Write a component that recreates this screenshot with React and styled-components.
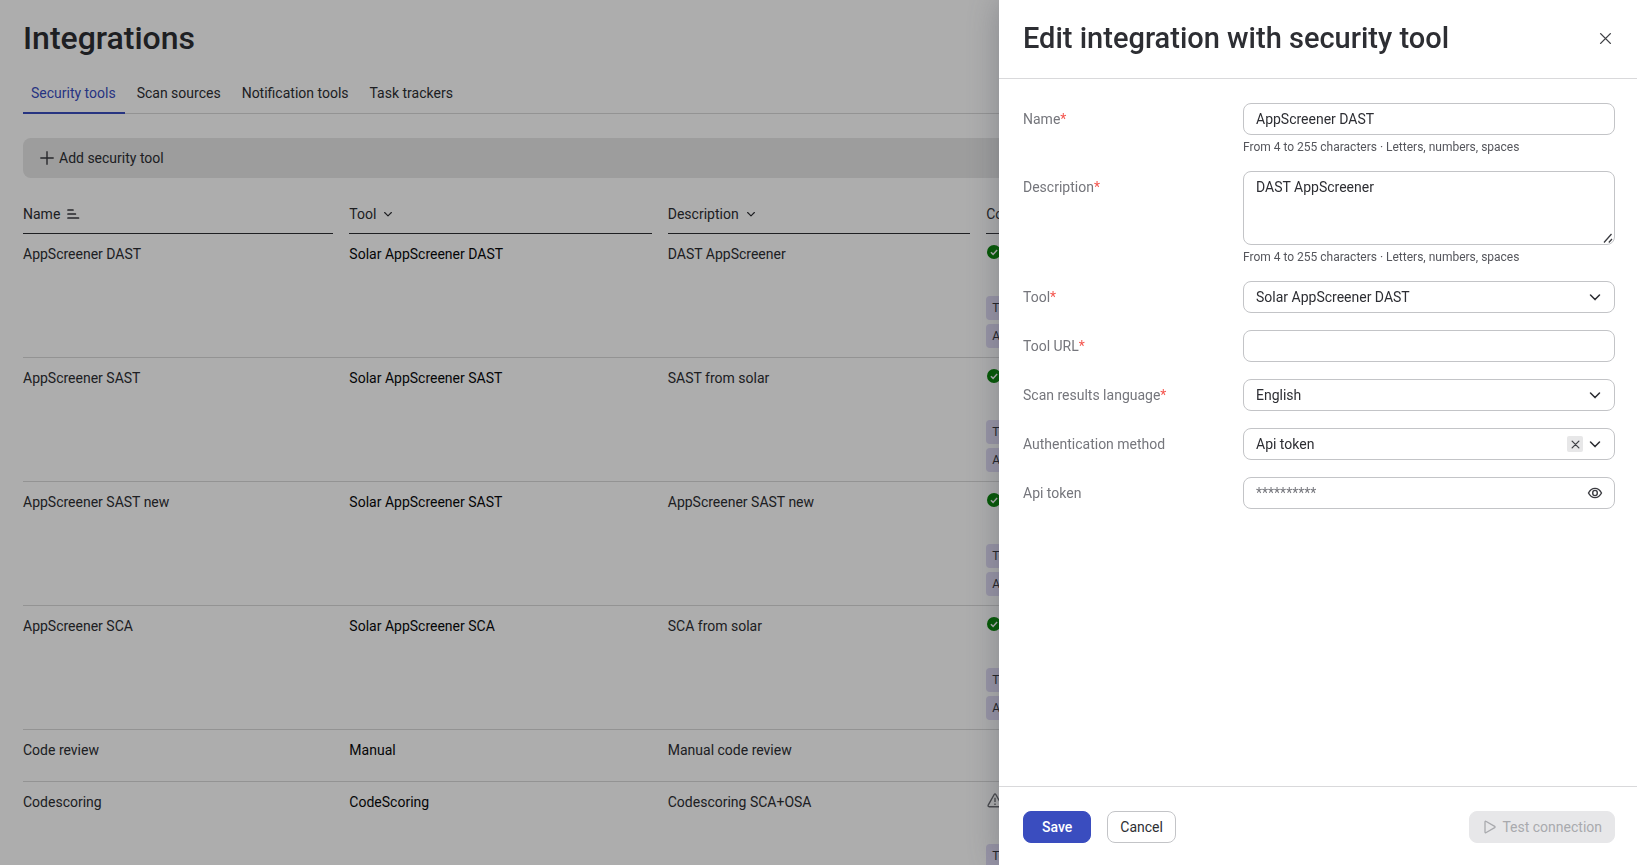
import React from "react";
import styled, { createGlobalStyle } from "styled-components";

const GlobalStyle = createGlobalStyle`
  *, *::before, *::after { box-sizing: border-box; }
  body {
    margin: 0;
    overflow: hidden;
    background: #fff;
    color: #2d2e33;
    font-family: Roboto, "Liberation Sans", sans-serif;
    font-size: 14px;
    line-height: 20px;
  }
  button, input, select, textarea { font: inherit; color: inherit; }
`;

const Page = styled.main`
  height: 100vh;
  overflow: hidden;
  padding: 18px 22px 0 23px;
`;

const PageTitle = styled.h1`
  margin: 0 0 15px;
  font-size: 32px;
  line-height: 40px;
  font-weight: 500;
`;

const Tabs = styled.nav`
  display: flex;
  gap: 4px;
  height: 41px;
  border-bottom: 1px solid #d9d9d9;
`;

const Tab = styled.a`
  height: 41px;
  padding: 10px 9px 0 8px;
  text-decoration: none;
  color: ${(p) => (p.$active ? "#3a4dbf" : "inherit")};
  border-bottom: ${(p) => (p.$active ? "2px solid #3a4dbf" : "0")};
`;

const AddBar = styled.div`
  margin: 24px 0 16px;
  padding: 4px 8px;
  height: 40px;
  border-radius: 8px;
  background: #e7e7e7;
`;

const AddButton = styled.button`
  display: flex;
  align-items: center;
  gap: 4px;
  height: 32px;
  padding: 0 8px;
  border: 0;
  background: none;
`;

const Table = styled.table`
  width: 100%;
  table-layout: fixed;
  border-collapse: separate;
  border-spacing: 0;
`;

const Col = styled.col`
  width: ${(p) => p.$width};
`;

const HeadCell = styled.th`
  padding: 0 16px 0 0;
  font-weight: 400;
  text-align: left;
`;

const HeadLabel = styled.div`
  display: flex;
  align-items: center;
  gap: 6px;
  height: 40px;
  border-bottom: 1px solid #2d2e33;
`;

const Cell = styled.td`
  height: ${(p) => (p.$tall ? "124px" : "52px")};
  padding: 10px 16px 0 0;
  vertical-align: top;
  border-bottom: 1px solid #d9d9d9;
`;

const Status = styled.div`
  display: flex;
  align-items: center;
  height: 16px;
  padding-left: 1px;
  margin-bottom: 36px;
`;

const Tags = styled.div`
  display: flex;
  flex-direction: column;
  align-items: flex-start;
  gap: 4px;
`;

const Tag = styled.span`
  height: 24px;
  padding: 0 6px;
  border-radius: 4px;
  background: #dfdaf4;
  font-size: 12px;
  line-height: 24px;
`;

const Overlay = styled.div`
  position: fixed;
  inset: 0;
  display: flex;
  justify-content: flex-end;
  background: rgba(0, 0, 0, 0.32);
`;

const Drawer = styled.section`
  display: flex;
  flex-direction: column;
  width: 638px;
  max-width: 100vw;
  background: #fff;
  box-shadow: 0 0 32px rgba(60, 66, 80, 0.36);
`;

const DrawerHeader = styled.header`
  display: flex;
  align-items: center;
  justify-content: space-between;
  height: 79px;
  padding: 0 22px 2px 24px;
  border-bottom: 1px solid #d9d9db;
`;

const DrawerTitle = styled.h2`
  margin: 0;
  font-size: 29px;
  line-height: 36px;
  font-weight: 500;
`;

const IconButton = styled.button`
  display: flex;
  align-items: center;
  justify-content: center;
  width: 20px;
  height: 20px;
  padding: 0;
  border: 0;
  background: none;
`;

const Form = styled.form`
  flex: 1;
  display: flex;
  flex-direction: column;
  gap: 16px;
  padding: 24px 22px 24px 24px;
  overflow: auto;
`;

const Row = styled.div`
  display: grid;
  grid-template-columns: 220px 1fr;
  min-height: 33px;
`;

const Label = styled.label`
  padding-top: 6px;
  color: #75767c;
`;

const Required = styled.span`
  color: #f4564f;
`;

const Control = styled.div`
  position: relative;
  display: flex;
`;

const Input = styled.input`
  width: 100%;
  height: 32px;
  padding: 0 12px;
  border: 1px solid #c3c4c7;
  border-radius: 8px;
  background: #fff;
  &::placeholder { color: #75767c; opacity: 1; }
`;

const Select = styled.select`
  width: 100%;
  height: 32px;
  padding: 0 60px 0 12px;
  border: 1px solid #c3c4c7;
  border-radius: 8px;
  background: #fff;
  appearance: none;
`;

const TextArea = styled.textarea`
  width: 100%;
  height: 74px;
  padding: 5px 12px;
  border: 1px solid #c3c4c7;
  border-radius: 8px;
  resize: vertical;
  &::-webkit-resizer { display: none; }
`;

const Adornments = styled.div`
  position: absolute;
  top: 0;
  right: 12px;
  display: flex;
  align-items: center;
  gap: 4px;
  height: 32px;
  pointer-events: none;
`;

const ResizeMark = styled.svg`
  position: absolute;
  right: 2px;
  bottom: 2px;
  pointer-events: none;
`;

const ClearButton = styled.button`
  display: flex;
  align-items: center;
  justify-content: center;
  width: 16px;
  height: 16px;
  padding: 0;
  border: 0;
  border-radius: 2px;
  background: #e7e7e8;
  pointer-events: auto;
`;

const Hint = styled.p`
  margin: 4px 0 0;
  font-size: 12px;
  line-height: 16px;
  color: #55565c;
`;

const DrawerFooter = styled.footer`
  display: flex;
  align-items: center;
  gap: 16px;
  padding: 24px 22px 22px 24px;
  border-top: 1px solid #d9d9db;
`;

const buttonColors = {
  primary: "background: #3a4dbf; border-color: #3a4dbf; color: #fff; padding: 0 18px;",
  outline: "background: #fff; border-color: #c3c4c7;",
  muted: "background: #e7e7e9; border-color: #e7e7e9; color: #a9aaae; margin-left: auto;",
};

const Button = styled.button`
  display: flex;
  align-items: center;
  gap: 4px;
  height: 32px;
  padding: 0 12px;
  border: 1px solid;
  border-radius: 8px;
  font-weight: ${(p) => (p.$kind === "primary" ? 500 : 400)};
  ${(p) => buttonColors[p.$kind]}
`;

const PlusIcon = () => (
  <svg width="16" height="16" viewBox="0 0 16 16" stroke="#3a3b40" strokeWidth="1.4" fill="none" aria-hidden="true">
    <path d="M8 1.3v13.4M1.3 8h13.4" />
  </svg>
);

const SortIcon = () => (
  <svg width="14" height="12" viewBox="0 0 14 12" stroke="#3a3b40" strokeWidth="1.7" strokeLinecap="round" aria-hidden="true">
    <path d="M2 2h5M2 6h7.4M2 10h10.5" />
  </svg>
);

const ChevronIcon = ({ size = 16 }) => (
  <svg width={size} height={size} viewBox="0 0 16 16" stroke="#2d2e33" strokeWidth="1.5" fill="none" strokeLinecap="round" strokeLinejoin="round" aria-hidden="true">
    <path d="M3.5 6l4.5 4.6L12.5 6" />
  </svg>
);

const CrossIcon = ({ size, width = 1.3 }) => (
  <svg width={size} height={size} viewBox="0 0 12 12" stroke="#3f4045" strokeWidth={width} fill="none" strokeLinecap="round" aria-hidden="true">
    <path d="M1.5 1.5l9 9M10.5 1.5l-9 9" />
  </svg>
);

const CheckIcon = () => (
  <svg width="14" height="14" viewBox="0 0 14 14" role="img" aria-label="Connected">
    <circle cx="7" cy="7" r="7" fill="#008000" />
    <path d="M3.9 7.2l2.2 2.2 4-4.3" stroke="#fff" strokeWidth="1.5" fill="none" />
  </svg>
);

const WarningIcon = () => (
  <svg width="16" height="15" viewBox="0 0 16 15" stroke="#66676c" strokeWidth="1.4" fill="none" strokeLinejoin="round" role="img" aria-label="Warning">
    <path d="M7.2 1.5L1.2 12.2c-.4.8 0 1.5.9 1.5h11.8c.9 0 1.300-.7.9-1.5L8.800 1.5c-.4-.7-1.200-.7-1.600 0z" />
    <path d="M8 4.800v4.200M8 10.500v1.400" />
  </svg>
);

const EyeIcon = () => (
  <svg width="16" height="16" viewBox="0 0 16 16" stroke="#3a3b40" strokeWidth="1.4" fill="none" aria-hidden="true">
    <path d="M1.5 8C3 5.100 5.300 3.400 8 3.400S13 5.100 14.500 8C13 10.900 10.700 12.600 8 12.600S3 10.900 1.500 8z" />
    <ellipse cx="8" cy="8" rx="2.300" ry="2.600" />
  </svg>
);

const PlayIcon = () => (
  <svg width="16" height="16" viewBox="0 0 16 16" stroke="#a9aaae" strokeWidth="1.3" fill="none" strokeLinejoin="round" aria-hidden="true">
    <path d="M3 2.700v10.600a.5.5 0 00.8.4l8.900-5.100a.7.7 0 000-1.200L3.800 2.300a.5.500 0 00-.8.4z" />
  </svg>
);

const tabs = ["Security tools", "Scan sources", "Notification tools", "Task trackers"];

const rows = [
  { name: "AppScreener DAST", tool: "Solar AppScreener DAST", text: "DAST AppScreener", status: "ok" },
  { name: "AppScreener SAST", tool: "Solar AppScreener SAST", text: "SAST from solar", status: "ok" },
  { name: "AppScreener SAST new", tool: "Solar AppScreener SAST", text: "AppScreener SAST new", status: "ok" },
  { name: "AppScreener SCA", tool: "Solar AppScreener SCA", text: "SCA from solar", status: "ok" },
  { name: "Code review", tool: "Manual", text: "Manual code review" },
  { name: "Codescoring", tool: "CodeScoring", text: "Codescoring SCA+OSA", status: "warning" },
];

const ToolName = styled.span`
  color: #08090b;
`;

function Field({ id, label, required, hint, children }) {
  return (
    <Row>
      <Label htmlFor={id}>
        {label}
        {required && <Required>*</Required>}
      </Label>
      <div>
        <Control>{children}</Control>
        {hint && <Hint>{hint}</Hint>}
      </div>
    </Row>
  );
}

const limits = "From 4 to 255 characters · Letters, numbers, spaces";

export default function App() {
  return (
    <>
      <GlobalStyle />
      <Page>
        <PageTitle>Integrations</PageTitle>
        <Tabs>
          {tabs.map((t, i) => (
            <Tab key={t} href="#" $active={i === 0}>{t}</Tab>
          ))}
        </Tabs>
        <AddBar>
          <AddButton type="button"><PlusIcon />Add security tool</AddButton>
        </AddBar>
        <Table>
          <colgroup>
            <Col $width="20.5%" />
            <Col $width="20%" />
            <Col $width="20%" />
            <Col />
          </colgroup>
          <thead>
            <tr>
              <HeadCell><HeadLabel>Name <SortIcon /></HeadLabel></HeadCell>
              <HeadCell><HeadLabel>Tool <ChevronIcon size={12} /></HeadLabel></HeadCell>
              <HeadCell><HeadLabel>Description <ChevronIcon size={12} /></HeadLabel></HeadCell>
              <HeadCell><HeadLabel>Connection</HeadLabel></HeadCell>
            </tr>
          </thead>
          <tbody>
            {rows.map((r) => (
              <tr key={r.name}>
                <Cell $tall={r.status}>{r.name}</Cell>
                <Cell $tall={r.status}><ToolName>{r.tool}</ToolName></Cell>
                <Cell $tall={r.status}>{r.text}</Cell>
                <Cell $tall={r.status}>
                  {r.status && (
                    <>
                      <Status>{r.status === "ok" ? <CheckIcon /> : <WarningIcon />}</Status>
                      <Tags><Tag>Tool URL</Tag><Tag>Api token</Tag></Tags>
                    </>
                  )}
                </Cell>
              </tr>
            ))}
          </tbody>
        </Table>
      </Page>
      <Overlay>
        <Drawer role="dialog" aria-labelledby="drawer-title">
          <DrawerHeader>
            <DrawerTitle id="drawer-title">Edit integration with security tool</DrawerTitle>
            <IconButton type="button" aria-label="Close"><CrossIcon size={13} /></IconButton>
          </DrawerHeader>
          <Form id="integration">
            <Field id="name" label="Name" required hint={limits}>
              <Input id="name" defaultValue="AppScreener DAST" />
            </Field>
            <Field id="description" label="Description" required hint={limits}>
              <TextArea id="description" defaultValue="DAST AppScreener" />
              <ResizeMark width="10" height="10" viewBox="0 0 10 10" stroke="#3a3b40" strokeWidth="1.3" aria-hidden="true">
                <path d="M1 9.500L8.500 1M5.800 9.500L9 6" />
              </ResizeMark>
            </Field>
            <Field id="tool" label="Tool" required>
              <Select id="tool"><option>Solar AppScreener DAST</option></Select>
              <Adornments><ChevronIcon size={16} /></Adornments>
            </Field>
            <Field id="url" label="Tool URL" required>
              <Input id="url" />
            </Field>
            <Field id="language" label="Scan results language" required>
              <Select id="language"><option>English</option></Select>
              <Adornments><ChevronIcon size={16} /></Adornments>
            </Field>
            <Field id="auth" label="Authentication method">
              <Select id="auth"><option>Api token</option></Select>
              <Adornments>
                <ClearButton type="button" aria-label="Clear"><CrossIcon size={9} width={1.7} /></ClearButton>
                <ChevronIcon size={16} />
              </Adornments>
            </Field>
            <Field id="token" label="Api token">
              <Input id="token" placeholder="**********" />
              <Adornments>
                <EyeIcon />
              </Adornments>
            </Field>
          </Form>
          <DrawerFooter>
            <Button type="submit" form="integration" $kind="primary">Save</Button>
            <Button type="button" $kind="outline">Cancel</Button>
            <Button type="button" disabled $kind="muted"><PlayIcon />Test connection</Button>
          </DrawerFooter>
        </Drawer>
      </Overlay>
    </>
  );
}
